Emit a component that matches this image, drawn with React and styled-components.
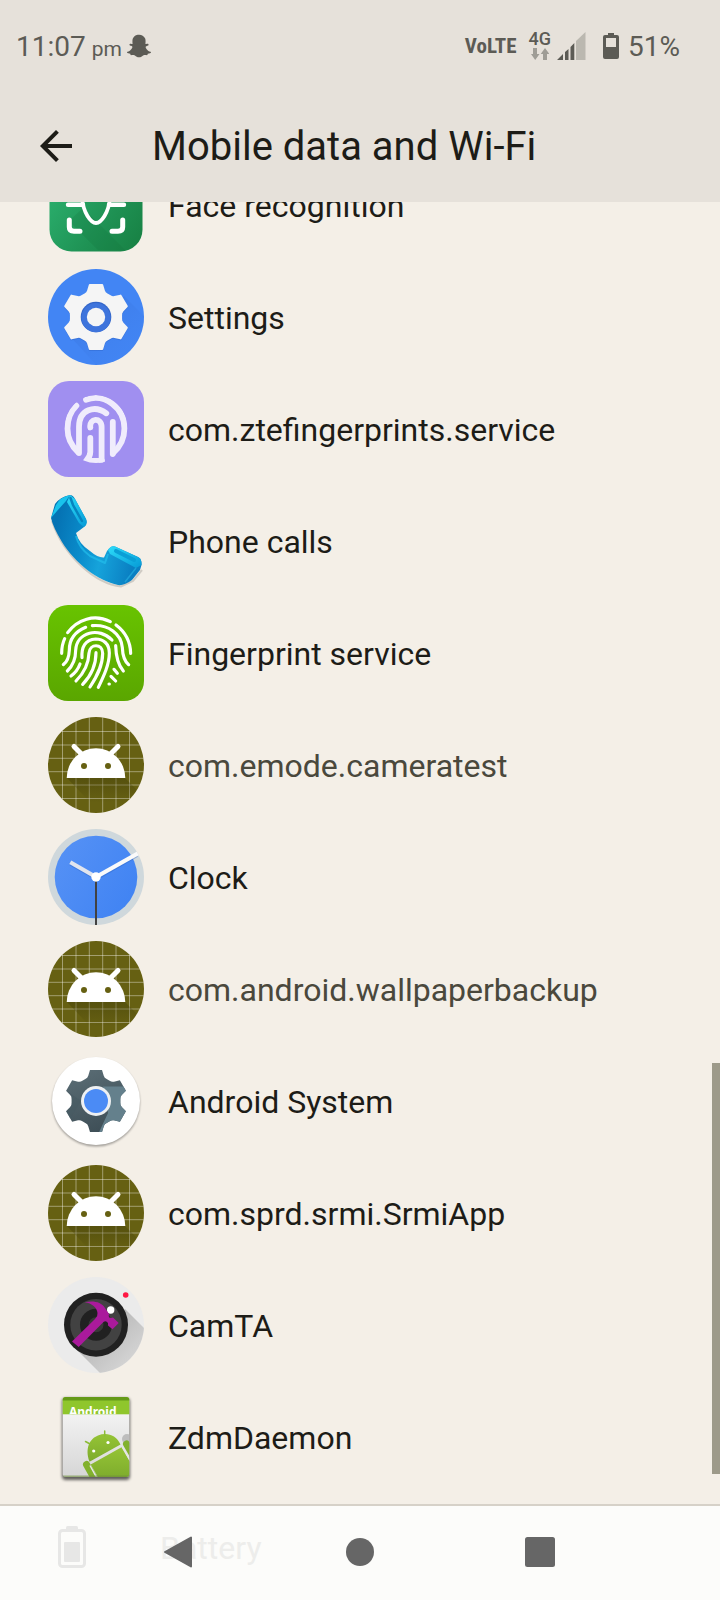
import React from "react";
import styled, { createGlobalStyle } from "styled-components";
import { FaSnapchatGhost } from "react-icons/fa";

const GlobalStyle = createGlobalStyle`
  *, *::before, *::after { box-sizing: border-box; }
  body {
    margin: 0;
    background: #f4efe7;
    color: #1d1c17;
    font-family: Roboto, "Noto Sans", sans-serif;
  }
  button { border: 0; padding: 0; background: none; color: inherit; font: inherit; cursor: pointer; }
  svg { display: block; flex: none; }
`;

const Screen = styled.div`
  min-height: 100vh;
  display: flex;
  flex-direction: column;
  overflow: hidden;
`;

const Header = styled.header`
  position: relative;
  z-index: 1;
  background: #e6e1da;
`;

const StatusBar = styled.div`
  height: 92px;
  padding: 0 40px 0 16px;
  display: flex;
  align-items: center;
  justify-content: space-between;
  color: #5c5b55;
`;

const StatusGroup = styled.div`
  display: flex;
  align-items: center;
`;

const StatusText = styled.span`
  padding-top: 2px;
  font-size: 28px;
  line-height: 32px;
`;

const Meridiem = styled.span`
  margin: 0 5px 0 6px;
  padding-top: 7px;
  font-size: 21px;
  line-height: 27px;
`;

const VolteLabel = styled.span`
  margin-right: 12px;
  font-family: "Roboto Condensed", "Liberation Sans Narrow", Roboto, sans-serif;
  font-size: 21px;
  line-height: 24px;
  font-weight: 700;
`;

const Network = styled.div`
  margin-right: 6px;
  display: flex;
  flex-direction: column;
  align-items: center;
  gap: 2px;
  font-size: 18px;
  line-height: 14px;
  font-weight: 500;
`;

const BatterySlot = styled.span`
  margin: 0 9px 0 17px;
`;

const AppBar = styled.div`
  height: 110px;
  padding: 0 32px 2px;
  display: flex;
  align-items: center;
  gap: 72px;
`;

const Title = styled.h1`
  margin: 0;
  padding-top: 2px;
  font-size: 40px;
  line-height: 48px;
  font-weight: 400;
`;

const Content = styled.main`
  position: relative;
  flex: 1;
  margin-top: -53px;
  padding-bottom: 11px;
`;

const AppList = styled.ul`
  margin: 0;
  padding: 0;
  list-style: none;
`;

const AppRow = styled.button`
  width: 100%;
  height: 112px;
  padding: 0 48px;
  display: flex;
  align-items: center;
  gap: 24px;
  text-align: left;
  color: ${(p) => (p.$muted ? "#4a483c" : "#1d1c17")};
`;

const Label = styled.span`
  padding-top: 2px;
  font-size: 32px;
  line-height: 40px;
`;

const ScrollThumb = styled.div`
  position: absolute;
  right: 0;
  bottom: 30px;
  width: 8px;
  height: 411px;
  background: #9d9a8a;
`;

const NavBar = styled.nav`
  position: relative;
  height: 96px;
  padding: 0 12.5% 2px;
  display: flex;
  border-top: 2px solid #d6d1c8;
  background: #fcfcfa;
`;

const HiddenRow = styled.div`
  position: absolute;
  inset: 0;
  padding: 0 48px 12px;
  display: flex;
  align-items: center;
  gap: 64px;
  color: #ededeb;
`;

const NavButton = styled.button`
  position: relative;
  flex: 1;
  display: flex;
  align-items: center;
  justify-content: center;
  color: #666;
`;

const Icon = ({ children }) => (
  <svg width="96" height="96" viewBox="0 0 96 96" aria-hidden="true">
    {children}
  </svg>
);

const rotate = ([x, y], angle) =>
  [x * Math.cos(angle) - y * Math.sin(angle), x * Math.sin(angle) + y * Math.cos(angle)]
    .map((n) => n.toFixed(2))
    .join(" ");

const gearPath =
  Array.from({ length: 6 }, (_, k) => {
    const p = (x, y) => rotate([x, y], (k * Math.PI) / 3);
    return `${k ? "L" : "M"}${p(-11, -22.6)}Q${p(-8.6, -23.7)} ${p(-8, -26)}L${p(-6.2, -32)}L${p(6.2, -32)}L${p(8, -26)}Q${p(8.6, -23.7)} ${p(11, -22.6)}`;
  }).join("") + "Z";

const FaceIcon = () => (
  <Icon>
    <defs>
      <linearGradient id="face" x1="0" y1="0.3" x2="1" y2="1">
        <stop offset="0" stopColor="#2bb06e" />
        <stop offset="0.55" stopColor="#1f9355" />
        <stop offset="1" stopColor="#177f42" />
      </linearGradient>
    </defs>
    <rect x="1.5" y="1.5" width="93" height="93" rx="22" fill="url(#face)" />
    <path d="M21 64 50 93H77L35 51Z" fill="#14723a" opacity=".22" />
    <g fill="none" stroke="#fff" strokeLinecap="round" strokeLinejoin="round">
      <path d="M20 47.7H35M61 47.7H76" strokeWidth="4.4" />
      <path d="M34 40C35 56 43 66 48 66S61 56 62 40" strokeWidth="3.8" />
      <path d="M21.3 63V70Q21.3 74.3 26 74.3H32M74.7 63V70Q74.7 74.3 70 74.3H64" strokeWidth="5" />
    </g>
  </Icon>
);

const SettingsIcon = () => (
  <Icon>
    <defs>
      <linearGradient id="blueShade" x1="0" y1="0" x2="1" y2="1">
        <stop offset="0" stopColor="#366fd6" />
        <stop offset="1" stopColor="#4285f4" stopOpacity="0" />
      </linearGradient>
      <clipPath id="settingsClip"><circle cx="48" cy="48" r="48" /></clipPath>
    </defs>
    <circle cx="48" cy="48" r="48" fill="#4285f4" />
    <path clipPath="url(#settingsClip)" d="M76 27 100 51V100H52L18 63 60 50Z" fill="url(#blueShade)" opacity=".65" />
    <path transform="translate(48 49)" d={gearPath} fill="#2c5fc0" opacity=".35" stroke="#2c5fc0" strokeWidth="2" />
    <path transform="translate(48 48)" d={gearPath} fill="#f5f5f5" stroke="#f5f5f5" strokeWidth="2" strokeLinejoin="round" />
    <circle cx="48" cy="48" r="15.3" fill="#3265c8" />
    <circle cx="48" cy="48.6" r="14.6" fill="#3e74dc" />
    <circle cx="48" cy="48" r="9.2" fill="#f5f5f5" />
  </Icon>
);

const ZteIcon = () => (
  <Icon>
    <rect width="96" height="96" rx="21" fill="#a08ff0" />
    <defs>
      <clipPath id="zteClip"><ellipse cx="48" cy="48" rx="32" ry="34" /></clipPath>
    </defs>
    <g clipPath="url(#zteClip)" fill="none" stroke="#f0ecfc" strokeWidth="5.8" strokeLinecap="round" strokeLinejoin="round">
      <path d="M38 18.7C57 12 76.4 27 76.4 47.5C76.4 58 72 66 65 72" />
      <path d="M28.4 24.7C22.5 30.5 19.5 38 19.5 47.5C19.5 57 23.5 65 30 71" />
      <path d="M31 72V46C31 28 47 24 58.3 32.3" />
      <path d="M64.8 41V73" />
      <path d="M42.3 46.5C41 37 53.6 36 53.6 46V81" />
      <path d="M42.3 57V71C42.3 75 40.5 77.500 38 80H54" />
    </g>
  </Icon>
);

const PhoneIcon = () => (
  <Icon>
    <defs>
      <linearGradient id="phone" x1="0" y1="0.6" x2="0.9" y2="0.8">
        <stop offset="0" stopColor="#0573b4" />
        <stop offset="0.35" stopColor="#0a8ccb" />
        <stop offset="0.6" stopColor="#16a3db" />
        <stop offset="1" stopColor="#0a7fc2" />
      </linearGradient>
      <linearGradient id="phoneFace" x1="0" y1="0" x2="1" y2="1">
        <stop offset="0" stopColor="#2ddcf9" />
        <stop offset="1" stopColor="#069ad6" />
      </linearGradient>
    </defs>
    <path d="M4 28C16 64 48 91 73 93.5L85 88 94 77" fill="none" stroke="#000" strokeOpacity=".15" strokeWidth="2" />
    <path d="M22 2Q25 2 27 6L38 26Q40 31 36 34L28 40Q31 51 42 58Q50 65 56 64.500L59 58Q63 52 67 53.500L90 64Q94 66 93.500 72L92 77 84 87Q76 93 70 92C50 88 27 70 14 49Q5 34 3 25L7 11Q12 4 22 2Z" fill="url(#phone)" />
    <path d="M8 12Q12 4 22 2L18 8 9 18 3 25Z" fill="#19c3ec" />
    <path d="M22 2 27 6 38 26Q40 32 36 34L31 30 19 9Z" fill="url(#phoneFace)" />
    <path d="M22.500 5 25 12 34 28" fill="none" stroke="#0784bf" strokeWidth="2.500" strokeLinecap="round" />
    <path d="M67 53.500 90 64Q94 66 93.500 72L88 75 62 61 60 57Q63 52 67 53.500Z" fill="url(#phoneFace)" />
    <path d="M68 58 86 67" fill="none" stroke="#0a9fd6" strokeWidth="4" strokeLinecap="round" />
    <path d="M60 61 57 70 42 63Q31 55 28 43" fill="none" stroke="#22bdeb" strokeOpacity=".7" strokeWidth="2" strokeLinejoin="round" />
    <path d="M88 75 77 89" fill="none" stroke="#28b4e5" strokeOpacity=".6" strokeWidth="1.500" />
  </Icon>
);

const FingerprintIcon = () => (
  <Icon>
    <defs>
      <linearGradient id="green" x1="0" y1="0" x2="0" y2="1">
        <stop offset="0" stopColor="#68c300" />
        <stop offset="1" stopColor="#5aa600" />
      </linearGradient>
    </defs>
    <rect width="96" height="96" rx="20" fill="url(#green)" />
    <g transform="translate(-8 -10) scale(.33333)" fill="none" stroke="#fff" strokeWidth="9.500" strokeLinecap="round">
      <path d="M83 113C112 73 163 56 211 80" />
      <path d="M228 90C256 111 271 139 272 175" />
      <path d="M74 131Q65 150 65 175" />
      <path d="M137 97C103 111 88 134 88 165C87 188 80 202 70 209" />
      <path d="M157 92C205 88 244 116 247 158C248 185 256 201 266 209" />
      <path d="M82 228C101 210 107 191 107 166C110 110 178 95 216 135" />
      <path d="M120 207Q112 229 93 243" />
      <path d="M227 152C228 188 234 210 250 228" />
      <path d="M126 188C124 157 135 134 167 132C190 132 208 146 208 174C208 208 192 242 175 277" />
      <path d="M108 258C134 232 146 204 147 174C149 145 188 145 188 175C188 213 171 244 150 276" />
      <path d="M168 173C168 212 152 243 128 268" />
      <path d="M222 223 232 235M213 244 227 258" />
      <path d="M207 267H208" />
    </g>
  </Icon>
);

const gridLines = [14.5, 28, 41.3, 54.7, 68, 81.5];

const AndroidIcon = () => (
  <Icon>
    <defs>
      <clipPath id="androidClip"><circle cx="48" cy="48" r="48" /></clipPath>
      <linearGradient id="headShade" x1="0" y1="0" x2="0" y2="1">
        <stop offset="0" stopColor="#3e3a08" stopOpacity=".4" />
        <stop offset="0.7" stopColor="#3e3a08" stopOpacity="0" />
      </linearGradient>
    </defs>
    <g clipPath="url(#androidClip)">
      <rect width="96" height="96" fill="#666012" />
      <path d={gridLines.map((n) => `M${n} 0V96M0 ${n}H96`).join("")} stroke="#fff" strokeOpacity=".4" strokeWidth="1" />
      <path d="M19 61H77L88 72V96H52Z" fill="url(#headShade)" />
    </g>
    <path d="M18.700 61A29.300 29.700 0 0 1 77.300 61Z" fill="#fff" />
    <path d="M26 29.500 34.500 38M70 29.500 61.500 38" stroke="#fff" strokeWidth="5" strokeLinecap="round" />
    <circle cx="36" cy="49" r="3" fill="#666012" />
    <circle cx="60" cy="49" r="3" fill="#666012" />
  </Icon>
);

const ClockIcon = () => (
  <Icon>
    <defs>
      <linearGradient id="clock" x1="0" y1="0.2" x2="1" y2="0.8">
        <stop offset="0" stopColor="#5591f5" />
        <stop offset="1" stopColor="#4083f3" />
      </linearGradient>
    </defs>
    <circle cx="48" cy="48" r="48" fill="#cfd8dc" />
    <circle cx="48" cy="48" r="41.300" fill="url(#clock)" />
    <path d="M48 49 22.500 34.500M48 49.500 89 26" stroke="#2b62c4" strokeOpacity=".4" strokeWidth="4" />
    <path d="M48 48 22.300 33.300" stroke="#e1e5ee" strokeWidth="4" />
    <path d="M48 48 89.700 24.500" stroke="#fafafa" strokeWidth="4.300" />
    <path d="M48 48V96" stroke="#424242" strokeWidth="2" />
    <circle cx="48" cy="48" r="4.700" fill="#fff" />
  </Icon>
);

const SystemIcon = () => (
  <Icon>
    <defs>
      <linearGradient id="steel" x1="0.2" y1="0" x2="0.6" y2="1">
        <stop offset="0" stopColor="#62757d" />
        <stop offset="1" stopColor="#37474f" />
      </linearGradient>
      <clipPath id="gearClip"><path transform="translate(48 48) scale(.97)" d={gearPath} /></clipPath>
      <filter id="soft" x="-10%" y="-10%" width="120%" height="120%"><feGaussianBlur stdDeviation="1" /></filter>
    </defs>
    <circle cx="48" cy="49.500" r="44" fill="#000" opacity=".35" filter="url(#soft)" />
    <circle cx="48" cy="48" r="44" fill="#fff" />
    <g clipPath="url(#gearClip)">
      <rect width="96" height="96" fill="url(#steel)" />
      <path d="M55 33.500H90V90H46L60 60Z" fill="#64808c" />
      <path d="M16 36 33 48 18 72Z" fill="#455a62" opacity=".5" />
    </g>
    <circle cx="48" cy="48" r="15" fill="#eef0f2" />
    <circle cx="48" cy="48" r="12" fill="#4b8bf5" />
  </Icon>
);

const CamIcon = () => (
  <Icon>
    <defs>
      <linearGradient id="longShade" x1="0.3" y1="0.3" x2="0.9" y2="0.9">
        <stop offset="0" stopColor="#b8b8b8" />
        <stop offset="1" stopColor="#dadada" />
      </linearGradient>
      <clipPath id="camClip"><circle cx="48" cy="48" r="48" /></clipPath>
    </defs>
    <circle cx="48" cy="48" r="48" fill="#ebebeb" />
    <path clipPath="url(#camClip)" d="M77 32 98 53V98H54L28 72Z" fill="url(#longShade)" />
    <circle cx="48" cy="47.700" r="32" fill="#212121" />
    <circle cx="48" cy="47.700" r="25.700" fill="#424242" />
    <circle cx="48" cy="47.700" r="16" fill="#212121" />
    <circle cx="48" cy="47.700" r="7.500" fill="#383838" />
    <circle cx="62.700" cy="33" r="3.700" fill="#fff" />
    <path d="M24 64.500 47 42Q50 39 49.500 36C49 31 44 26 36.700 25.300C46 23.500 53 25 57 31L61 37Q60 41 63 41L65 40.500 70.700 46 64.500 52.300 60 48.500 60 46Q58 43 55.500 45L30.700 70Z" fill="#aa1a9c" />
    <circle cx="77.700" cy="18" r="2.800" fill="#ff1744" />
  </Icon>
);

const DaemonIcon = () => (
  <Icon>
    <defs>
      <linearGradient id="paper" x1="0" y1="0" x2="0" y2="1">
        <stop offset="0" stopColor="#fafafa" />
        <stop offset="1" stopColor="#d5d5d5" />
      </linearGradient>
      <linearGradient id="lime" x1="0" y1="0" x2="0" y2="1">
        <stop offset="0" stopColor="#95c436" />
        <stop offset="1" stopColor="#7dab2c" />
      </linearGradient>
      <clipPath id="cardClip"><rect x="14.700" y="8" width="66.600" height="80" rx="3" /></clipPath>
      <clipPath id="bandClip"><rect x="14.700" y="8" width="66.600" height="17.300" /></clipPath>
      <filter id="cardSoft" x="-10%" y="-10%" width="120%" height="120%"><feGaussianBlur stdDeviation="1.500" /></filter>
    </defs>
    <rect x="14" y="9" width="68" height="82" rx="4" fill="#000" opacity=".6" filter="url(#cardSoft)" />
    <g clipPath="url(#cardClip)">
      <rect x="14" y="8" width="68" height="82" fill="url(#paper)" />
      <rect x="14" y="8" width="68" height="17.300" fill="#8fc62c" />
      <rect x="14" y="8" width="68" height="3.500" fill="#659a18" />
      <circle cx="79" cy="50" r="5" fill="#bdbdbd" />
      <path d="M41.500 72.700C36.500 59 42 49.500 50 46.500C59 43 68 46 72.500 55.500Z" fill="url(#lime)" />
      <path d="M42.700 75.500 73.500 58.300 84 76V90H51Z" fill="url(#lime)" />
      <path d="M38.500 75.500 46 89M78.500 55 86 68" stroke="#82b12d" strokeWidth="7" strokeLinecap="round" />
      <path d="M42 76.500 50 91M74.500 58 83 73" stroke="#e6e6e6" strokeWidth="1.500" />
      <path d="M56.700 47V42M43 55.500 37.500 52.500" stroke="#8cbc36" strokeWidth="1.500" strokeLinecap="round" />
      <circle cx="60" cy="53.500" r="1.600" fill="#fff" />
      <circle cx="45.700" cy="62" r="1.600" fill="#fff" />
      <rect x="14" y="86.500" width="68" height="2" fill="#6f8f3c" opacity=".6" />
    </g>
    <text x="21" y="27" clipPath="url(#bandClip)" fill="#fff" fontFamily="Noto Sans, sans-serif" fontWeight="700" fontSize="12">
      Android
    </text>
  </Icon>
);

const apps = [
  { name: "Face recognition", icon: FaceIcon },
  { name: "Settings", icon: SettingsIcon },
  { name: "com.ztefingerprints.service", icon: ZteIcon },
  { name: "Phone calls", icon: PhoneIcon },
  { name: "Fingerprint service", icon: FingerprintIcon },
  { name: "com.emode.cameratest", icon: AndroidIcon, muted: true },
  { name: "Clock", icon: ClockIcon },
  { name: "com.android.wallpaperbackup", icon: AndroidIcon, muted: true },
  { name: "Android System", icon: SystemIcon },
  { name: "com.sprd.srmi.SrmiApp", icon: AndroidIcon },
  { name: "CamTA", icon: CamIcon },
  { name: "ZdmDaemon", icon: DaemonIcon },
];

const DataArrows = () => (
  <svg width="18" height="12" viewBox="0 0 18 12" fill="#9f9d96" aria-hidden="true">
    <path d="M2 0H6V6H8.500L4.200 12 0 6H2Z" />
    <path d="M12 12H16V6H18.300L14 0 9.700 6H12Z" />
  </svg>
);

const SignalIcon = () => (
  <svg width="29" height="28" viewBox="0 0 29 28" aria-hidden="true">
    <path d="M19 9 28.500 0V28H19Z" fill="#bbb8b0" />
    <path d="M0 28 6 22V28ZM8 20 11.500 17V28H8ZM13.500 15 17.300 11V28H13.500Z" fill="#5c5b55" />
  </svg>
);

const BatteryIcon = () => (
  <svg width="16" height="26" viewBox="0 0 16 26" aria-hidden="true">
    <path fillRule="evenodd" fill="#5c5b55" d="M5 0H11V2H14Q16 2 16 4V24Q16 26 14 26H2Q0 26 0 24V4Q0 2 2 2H5ZM3 5V14H13V5Z" />
  </svg>
);

const BatteryOutline = () => (
  <svg width="48" height="48" viewBox="0 0 48 48" aria-hidden="true">
    <rect x="11.500" y="7.500" width="25" height="36" rx="3" fill="none" stroke="#e7e7e6" strokeWidth="3" />
    <rect x="18" y="3" width="12" height="5" rx="1.500" fill="#e7e7e6" />
    <rect x="16" y="19" width="16" height="20" rx="1" fill="#e7e7e6" />
  </svg>
);

export default function App() {
  return (
    <Screen>
      <GlobalStyle />
      <Header>
        <StatusBar>
          <StatusGroup>
            <StatusText>11:07</StatusText>
            <Meridiem>pm</Meridiem>
            <FaSnapchatGhost size={24} />
          </StatusGroup>
          <StatusGroup>
            <VolteLabel>VoLTE</VolteLabel>
            <Network>
              4G
              <DataArrows />
            </Network>
            <SignalIcon />
            <BatterySlot>
              <BatteryIcon />
            </BatterySlot>
            <StatusText>51%</StatusText>
          </StatusGroup>
        </StatusBar>
        <AppBar>
          <button type="button" aria-label="Back">
            <svg width="48" height="48" viewBox="0 0 24 24" fill="#1d1c17" aria-hidden="true">
              <path d="M20 11H7.830l5.590-5.590L12 4l-8 8 8 8 1.410-1.410L7.830 13H20v-2z" />
            </svg>
          </button>
          <Title>Mobile data and Wi-Fi</Title>
        </AppBar>
      </Header>
      <Content>
        <AppList>
          {apps.map(({ name, icon: AppIcon, muted }) => (
            <li key={name}>
              <AppRow type="button" $muted={muted}>
                <AppIcon />
                <Label>{name}</Label>
              </AppRow>
            </li>
          ))}
        </AppList>
        <ScrollThumb />
      </Content>
      <NavBar aria-label="System navigation">
        <HiddenRow>
          <BatteryOutline />
          <Label>Battery</Label>
        </HiddenRow>
        <NavButton type="button" aria-label="Back">
          <svg width="32" height="32" viewBox="0 0 32 32" aria-hidden="true">
            <path d="M1 16 27 1.500V30.500Z" fill="currentColor" stroke="currentColor" strokeWidth="2" strokeLinejoin="round" />
          </svg>
        </NavButton>
        <NavButton type="button" aria-label="Home">
          <svg width="28" height="28" viewBox="0 0 28 28" aria-hidden="true">
            <circle cx="14" cy="14" r="14" fill="currentColor" />
          </svg>
        </NavButton>
        <NavButton type="button" aria-label="Recent apps">
          <svg width="30" height="30" viewBox="0 0 30 30" aria-hidden="true">
            <rect width="30" height="30" rx="2.500" fill="currentColor" />
          </svg>
        </NavButton>
      </NavBar>
    </Screen>
  );
}
